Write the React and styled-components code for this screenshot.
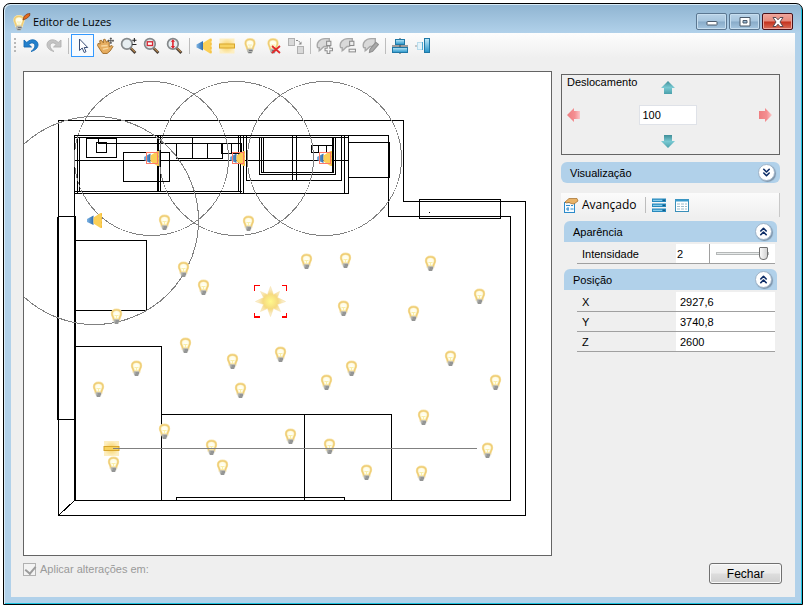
import React, {useState} from 'react'
import styled, {createGlobalStyle} from 'styled-components'
import {ChevronsDown, ChevronsUp} from 'lucide-react'

const GlobalStyle = createGlobalStyle`
    * {
        box-sizing: border-box;
    }
    body {
        margin: 0;
        background: #fff;
        color: #000;
        font-family: 'Liberation Sans', Arial, sans-serif;
        font-size: 11px;
        line-height: 14px;
    }
    button,
    input {
        font: inherit;
        color: inherit;
    }
`

const StyledDesktop = styled.div`
    display: flex;
    min-height: 100vh;
    padding: 3px 4px 5px 3px;
`

const StyledWindow = styled.main`
    flex: 1;
    display: flex;
    flex-direction: column;
    min-width: 0;
    padding: 0 7px 7px 7px;
    border: 1px solid #000;
    border-radius: 7px 7px 0 0;
    background: linear-gradient(#8fb4d1, #b1d1ea 29px);
    box-shadow: inset 1px 1px 0 #d9ecf8, inset -1px -1px 0 #1cc3e0;
`

const StyledTitleBar = styled.header`
    display: flex;
    align-items: center;
    height: 29px;
    padding: 6px 2px 0 2px;
    gap: 2px;
`

const StyledTitle = styled.h1`
    flex: 1;
    margin: 0;
    font-family: 'Open Sans', sans-serif;
    font-size: 11px;
    font-weight: 400;
    line-height: 16px;
`

const StyledCaptionButton = styled.button`
    display: flex;
    align-items: center;
    justify-content: center;
    width: 31px;
    height: 17px;
    padding: 0;
    border: 1px solid ${props => props.$danger ? '#4a1018' : '#5b7791'};
    border-radius: 2px;
    background: ${props => props.$danger
        ? 'linear-gradient(#f0a59b, #e58a7c 48%, #c4301c 52%, #d9705c)'
        : 'linear-gradient(#b9d3e8, #a6c5de 48%, #88abc8 52%, #a5c6e0)'};
    box-shadow: inset 0 0 0 1px ${props => props.$danger ? '#eea69c' : '#c7deef'};
`

const StyledBody = styled.div`
    flex: 1;
    display: flex;
    flex-direction: column;
    background: #efefef;
`

const StyledToolbar = styled.div`
    display: flex;
    align-items: center;
    height: 25px;
    padding-left: 3px;
    background: linear-gradient(#fdfdfd, #efefef);
`

const StyledGrip = styled.span`
    width: 2px;
    height: 15px;
    margin-right: 3px;
    background: repeating-linear-gradient(#b8b8b8 0 2px, transparent 2px 4px);
`

const StyledToolButton = styled.button`
    display: flex;
    align-items: center;
    justify-content: center;
    width: 23px;
    height: 23px;
    padding: 0;
    border: 1px solid ${props => props.$active ? '#3399ff' : 'transparent'};
    background: ${props => props.$active ? '#f7fbff' : 'transparent'};
    &:hover {
        border-color: #3399ff;
    }
`

const StyledSeparator = styled.span`
    width: 1px;
    height: 16px;
    margin: 0 2px 0 3px;
    background: #bdbdbd;
`

const StyledContent = styled.div`
    display: flex;
    align-items: flex-start;
    gap: 9px;
    padding: 13px 15px 0 12px;
`

const StyledCanvas = styled.section`
    flex: 1;
    min-width: 0;
    border: 1px solid #646464;
    background: #fff;
    & svg {
        display: block;
        width: 100%;
        height: auto;
    }
`

const StyledPanel = styled.aside`
    display: flex;
    flex-direction: column;
    width: 219px;
    padding-top: 3px;
`

const StyledMoveBox = styled.div`
    display: grid;
    grid-template-columns: 23px 1fr 29px;
    grid-template-rows: 25px 30px 24px;
    align-items: center;
    justify-items: center;
    margin-bottom: 7px;
    border: 1px solid #646464;
`

const StyledMoveLabel = styled.label`
    grid-area: 1 / 1 / 2 / 3;
    align-self: start;
    justify-self: start;
    padding-left: 5px;
`

const StyledMoveInput = styled.input`
    grid-area: 2 / 2;
    width: 58px;
    height: 20px;
    padding: 0 3px;
    border: 1px solid #dfe2e8;
    background: #fff;
`

const StyledArrow = styled.button`
    display: flex;
    grid-area: ${props => props.$area};
    padding: 0;
    border: 0;
    background: none;
`

const StyledSectionHeader = styled.h2`
    display: flex;
    align-items: center;
    justify-content: space-between;
    height: 21px;
    margin: 0;
    padding: 0 5px 0 9px;
    border-radius: ${props => props.$closed ? '6px' : '6px 6px 0 0'};
    background: #b1d1ea;
    font-size: 11px;
    font-weight: 400;
`

const StyledToggle = styled.button`
    display: flex;
    align-items: center;
    justify-content: center;
    width: 17px;
    height: 17px;
    padding: 0;
    border: 1px solid #9fb4c9;
    border-radius: 50%;
    background: #fff;
    box-shadow: 1px 1px 1px #7d93a8;
    color: #0c2c66;
`

const StyledPanelBar = styled.div`
    display: flex;
    align-items: center;
    height: 24px;
    margin: 10px 0 4px;
    padding-left: 2px;
    border-right: 1px solid #c8c8c8;
    background: linear-gradient(#fbfbfb, #efefef);
`

const StyledAdvanced = styled.button`
    display: flex;
    align-items: center;
    gap: 3px;
    padding: 0;
    margin-right: 5px;
    border: 0;
    background: none;
    font-family: 'Open Sans', sans-serif;
    font-size: 12px;
`

const StyledSections = styled.div`
    display: flex;
    flex-direction: column;
    gap: 5px;
    padding: 0 3px;
`

const StyledFields = styled.div`
    padding: 2px 2px 0 13px;
`

const StyledField = styled.div`
    display: flex;
    align-items: center;
    height: 20px;
    border-bottom: 1px solid #a0a0a0;
`

const StyledFieldLabel = styled.label`
    flex: 1;
    padding-left: 5px;
`

const StyledFieldValue = styled.div`
    display: flex;
    align-items: center;
    width: 99px;
    height: 19px;
    background: #fff;
`

const StyledFieldInput = styled.input`
    width: ${props => props.$short ? '33px' : '99px'};
    height: 19px;
    padding: 0 0 0 ${props => props.$short ? '1px' : '4px'};
    border: 0;
    background: transparent;
`

const StyledSlider = styled.input`
    appearance: none;
    width: 66px;
    height: 19px;
    margin: 0;
    padding: 0 6px;
    border-left: 1px solid #a0a0a0;
    background: transparent;
    &::-webkit-slider-runnable-track {
        height: 3px;
        border: 1px solid #b5b8b8;
        background: #e7eaea;
    }
    &::-webkit-slider-thumb {
        appearance: none;
        width: 9px;
        height: 13px;
        margin-top: -6px;
        border: 1px solid #707070;
        border-radius: 1px 1px 4px 4px;
        background: linear-gradient(90deg, #fafafa, #d2d2d2);
    }
`

const StyledFooter = styled.footer`
    display: flex;
    align-items: flex-start;
    justify-content: space-between;
    padding: 6px 13px 12px 12px;
`

const StyledCheckLabel = styled.label`
    display: flex;
    align-items: center;
    gap: 4px;
    color: #9a9a9a;
    & input {
        appearance: none;
        width: 13px;
        height: 13px;
        margin: 0;
        border: 1px solid #b1b1b1;
        background: #f3f3f3;
    }
    & input:checked::before {
        content: '';
        display: block;
        width: 5px;
        height: 8px;
        margin: 0 3px;
        border: solid #9c9c9c;
        border-width: 0 2px 2px 0;
        transform: rotate(40deg);
    }
`

const StyledClose = styled.button`
    width: 73px;
    height: 21px;
    margin-top: 1px;
    padding: 0;
    border: 1px solid #707070;
    border-radius: 3px;
    background: linear-gradient(#f2f2f2, #ebebeb 48%, #dddddd 52%, #cfcfcf);
    box-shadow: inset 0 0 0 1px #fafafa;
    font-size: 12px;
`

// shared gradients, referenced by every icon through url(#...)
const Gradients = () => (
    <svg width="0" height="0" style={{position: 'absolute'}} aria-hidden="true">
        <defs>
            <radialGradient id="glass">
                <stop offset="0" stopColor="#fffffa"/>
                <stop offset="0.7" stopColor="#fffde4"/>
                <stop offset="1" stopColor="#fbeeb8"/>
            </radialGradient>
            <radialGradient id="sun">
                <stop offset="0" stopColor="#fff98c"/>
                <stop offset="0.5" stopColor="#f6da80"/>
                <stop offset="1" stopColor="#f4dca4" stopOpacity="0.3"/>
            </radialGradient>
            <radialGradient id="strip">
                <stop offset="0" stopColor="#f8d160"/>
                <stop offset="1" stopColor="#fdeec0"/>
            </radialGradient>
            <linearGradient id="lamp">
                <stop offset="0" stopColor="#7db4e4"/>
                <stop offset="1" stopColor="#2e6cae"/>
            </linearGradient>
            <linearGradient id="teal" x2="0" y2="1">
                <stop offset="0" stopColor="#3f8e98"/>
                <stop offset="0.5" stopColor="#79c9d2"/>
                <stop offset="1" stopColor="#4aa0ab"/>
            </linearGradient>
            <linearGradient id="pink">
                <stop offset="0" stopColor="#ee7d80"/>
                <stop offset="0.6" stopColor="#f48f92"/>
                <stop offset="1" stopColor="#fbc6c8"/>
            </linearGradient>
            <linearGradient id="azure" x2="0" y2="1">
                <stop offset="0" stopColor="#bfe9fa"/>
                <stop offset="1" stopColor="#2493c8"/>
            </linearGradient>
        </defs>
    </svg>
)

const Icon = ({children, size = 16}) => (
    <svg width={size} height={size} viewBox="0 0 16 16" fill="none" aria-hidden="true">{children}</svg>
)

const BulbShape = () => (
    <g>
        <path d="M8 1.300C5 1.300 3.500 2.800 3.500 5.200C3.500 7.500 5 8.500 5.200 11H10.800C11 8.500 12.500 7.500 12.500 5.200C12.500 2.800 11 1.300 8 1.300Z" fill="url(#glass)" stroke="#f7e3ab" strokeWidth="2.400"/>
        <path d="M8 1.300C5 1.300 3.500 2.800 3.500 5.200C3.500 7.500 5 8.500 5.200 11M10.800 11C11 8.500 12.500 7.500 12.500 5.200C12.500 2.800 11 1.300 8 1.300" stroke="#efcd72" strokeWidth="1.300"/>
        <path d="M6 7H10M8 7.500V10.500" stroke="#f8eda0" strokeWidth="0.900"/>
        <path d="M5.200 10.800H10.800V13.500L9.700 15.500H6.300L5.200 13.500Z" fill="#b4b5af"/>
        <path d="M7 12.500H10.500M6.500 14.500H9.500" stroke="#74777c"/>
    </g>
)

const SpotShape = () => (
    <g>
        <path d="M0.500 6.500L7 3V12.500L0.500 9.500Z" fill="url(#lamp)"/>
        <path d="M7 5L14 0.500H15.500V15.500H14L7 11Z" fill="#fbcf56"/>
        <path d="M15 1V15" stroke="#f1b93b" strokeDasharray="2 2"/>
    </g>
)

const StripShape = () => (
    <g>
        <rect x="0.500" y="0.500" width="15" height="15" fill="url(#strip)"/>
        <rect x="0.500" y="6" width="15" height="4" fill="#f7d260" stroke="#d8a52c"/>
    </g>
)

const Lens = ({children}) => (
    <Icon size={17}>
        <path d="M9.500 10L14.500 15" stroke="#4b4036" strokeWidth="2.600"/>
        <path d="M10.500 10.500L14 14" stroke="#c08a4d"/>
        <circle cx="6.500" cy="6.500" r="5" fill="#e6edf0" stroke="#85898b" strokeWidth="1.600"/>
        {children}
    </Icon>
)

const Lasso = ({children}) => (
    <Icon size={17}>
        <path d="M1.500 10C0 5.500 3.500 1.500 8.500 1.500H12.500V7L9 9H7.500C6 10 5 11.500 3 13V10Z" fill="#d9d9d9" stroke="#a8a8a8" strokeWidth="1.300"/>
        {children}
    </Icon>
)

const icons = {
    undo: (
        <Icon>
            <path d="M1 2V9H8.500L5.800 6.500C8.500 3.500 12.500 5 11.800 8.300C11.500 10.500 10 12 8 13.500C12.500 12.500 15.300 9.500 15 6.300C14.500 1.500 8 0 3.800 4.500Z" fill="#2380cc" stroke="#166bb3" strokeWidth="0.900"/>
        </Icon>
    ),
    redo: (
        <Icon>
            <path d="M15 2V9H7.500L10.200 6.500C7.500 3.500 3.500 5 4.200 8.300C4.500 10.500 6 12 8 13.500C3.500 12.500 0.700 9.500 1 6.300C1.500 1.500 8 0 12.200 4.500Z" fill="#c4c4c4" stroke="#b2b2b2" strokeWidth="0.900"/>
        </Icon>
    ),
    pointer: (
        <Icon>
            <path d="M4.500 1V12.500L7.200 10L9.200 14.500L11 13.700L9.200 9.500H12.700Z" fill="#fff" stroke="#3a4f78"/>
        </Icon>
    ),
    hand: (
        <Icon size={17}>
            <path d="M1 6L3 6.500L2.500 3.500L4 3L6 5.500L6 2.500L7.500 2L9 5L10 3.500L11.500 5L11.500 9L14 8L15 9L12.500 13L9.500 15.500H5.500L3 12L0.500 8Z" fill="#e6ad60" stroke="#9a641f" strokeWidth="0.800"/>
            <path d="M4 8.500L10 8M5.500 11.500L10.500 10.500" stroke="#f9d89f" strokeWidth="1.300"/>
            <path d="M13 0.500V6.500M10 3.500H16M12 1.500H14M12 5.500H14M11 2.500V4.500M15 2.500V4.500" stroke="#444" strokeWidth="0.800"/>
        </Icon>
    ),
    zoom: (
        <Lens>
            <path d="M11.500 3H15.500M13.500 1V5M11.500 7H15.500" stroke="#222"/>
        </Lens>
    ),
    zoomWindow: (
        <Lens>
            <rect x="4" y="4.500" width="5" height="3.500" fill="#fff" stroke="#d52b35" strokeWidth="1.300"/>
        </Lens>
    ),
    zoomExtents: (
        <Lens>
            <path d="M6.500 3V10" stroke="#df2630" strokeWidth="1.500"/>
            <path d="M4.500 4.500L6.500 2L8.500 4.500ZM4.500 8.500L6.500 11L8.500 8.500Z" fill="#df2630"/>
        </Lens>
    ),
    spot: <Icon><SpotShape/></Icon>,
    strip: <Icon><StripShape/></Icon>,
    bulb: <Icon><BulbShape/></Icon>,
    bulbRemove: (
        <Icon>
            <BulbShape/>
            <path d="M7 8L15 15M15 8L7 15" stroke="#e22a2a" strokeWidth="1.800"/>
        </Icon>
    ),
    replace: (
        <Icon>
            <rect x="0.500" y="0.500" width="6" height="7" fill="#d9d9d9" stroke="#b0b0b0"/>
            <rect x="9.500" y="8.500" width="6" height="7" fill="#d9d9d9" stroke="#b0b0b0"/>
            <path d="M8 2.500H10.500L12.500 5.500" stroke="#888" strokeDasharray="2 1"/>
            <path d="M10.500 6.500H13.500V3.500Z" fill="#888"/>
        </Icon>
    ),
    lassoAdd: (
        <Lasso>
            <rect x="10" y="4" width="4" height="4" fill="#eee" stroke="#8b8b8b"/>
            <path d="M10.500 10.500V8.500H13V10.500H15.500V13H13V15.500H10.500V13H8.500V10.500Z" fill="#f4f4f4" stroke="#909090"/>
        </Lasso>
    ),
    lassoRemove: (
        <Lasso>
            <rect x="10" y="4" width="4" height="4" fill="#eee" stroke="#8b8b8b"/>
            <rect x="9.500" y="11.500" width="6" height="2.500" fill="#f4f4f4" stroke="#909090"/>
        </Lasso>
    ),
    lassoEdit: (
        <Lasso>
            <path d="M7 14.500L7.500 11.500L13 5L15.500 7L10 13.500Z" fill="#a9a9a9" stroke="#909090"/>
        </Lasso>
    ),
    alignCenter: (
        <Icon>
            <path d="M8 0V16" stroke="#444"/>
            <rect x="3.500" y="1.500" width="9" height="5" fill="url(#azure)" stroke="#1f78a6"/>
            <rect x="0.500" y="9.500" width="15" height="5" fill="url(#azure)" stroke="#1f78a6"/>
            <path d="M0 8H16" stroke="#444"/>
        </Icon>
    ),
    alignRight: (
        <Icon>
            <rect x="9.500" y="0.500" width="5" height="14" fill="url(#azure)" stroke="#1f78a6"/>
            <rect x="2.500" y="4.500" width="5" height="7" fill="#e4f4fb" stroke="#b9dcec"/>
            <path d="M7.500 4V12" stroke="#4aa9d3"/>
            <path d="M0 8H2" stroke="#999"/>
        </Icon>
    ),
    advanced: (
        <Icon>
            <rect x="1.500" y="5.500" width="10" height="10" fill="#f6fbff" stroke="#2d8bca"/>
            <path d="M3 8.500H7M8 8.500H10M3 12H6M7.500 12H10.500M5 10V14" stroke="#2d8bca"/>
            <path d="M2 5L6 1.500H14L15 4L11 7L8 6.500L6 5.500L3 6Z" fill="#e9b368" stroke="#a06c2a" strokeWidth="0.700"/>
        </Icon>
    ),
    list: (
        <Icon>
            <path d="M1 1.500H15V5H1ZM1 6.500H15V10H1ZM1 11.500H15V15H1Z" fill="#2789bd"/>
            <path d="M2 3.300H11M2 8.300H11M2 13.300H11" stroke="#9ddcf5"/>
            <path d="M12 3.300H14M12 8.300H14M12 13.300H14" stroke="#134f74"/>
        </Icon>
    ),
    table: (
        <Icon>
            <rect x="1.500" y="2.500" width="13" height="12" fill="#fff" stroke="#3a8fb9"/>
            <path d="M1 3.500H15" stroke="#3a9acb" strokeWidth="2"/>
            <path d="M3 7H6M7 7H10M11 7H13M3 9.500H6M7 9.500H10M11 9.500H13M3 12H6M7 12H10M11 12H13" stroke="#9dbccb"/>
        </Icon>
    )
}

const tools = [
    ['undo', 'Desfazer'], ['redo', 'Refazer'], null,
    ['pointer', 'Selecionar'], ['hand', 'Mover'], ['zoom', 'Zoom'],
    ['zoomWindow', 'Zoom em janela'], ['zoomExtents', 'Zoom total'], null,
    ['spot', 'Spot'], ['strip', 'Luz linear'], ['bulb', 'Luz pontual'],
    ['bulbRemove', 'Remover luz'], ['replace', 'Substituir'], null,
    ['lassoAdd', 'Adicionar grupo'], ['lassoRemove', 'Remover grupo'], ['lassoEdit', 'Editar grupo'], null,
    ['alignCenter', 'Centralizar'], ['alignRight', 'Alinhar']
]

const bulbs = [
    [164, 222], [248, 223], [306, 261], [345, 260], [430, 263], [183, 269], [203, 287], [343, 308],
    [413, 313], [479, 296], [116, 316], [185, 345], [232, 361], [280, 354], [136, 368], [98, 389],
    [240, 390], [326, 382], [351, 368], [450, 358], [495, 382], [423, 417], [164, 431], [211, 447],
    [290, 436], [329, 446], [487, 450], [113, 464], [222, 467], [366, 472], [421, 473]
]

const spots = [
    {x: 143, y: 150, marked: true},
    {x: 229, y: 150, marked: true},
    {x: 316, y: 150, marked: true},
    {x: 86, y: 212, marked: false}
]

const FloorPlan = () => (
    <svg viewBox="23.5 71.5 527 483" fill="none" role="img" aria-label="Planta">
        <g stroke="#000" shapeRendering="crispEdges">
            {/* walls */}
            <path d="M58 120H403V201H525V515H58Z"/>
            <path d="M74 135H388V216H510V500H74Z"/>
            <path d="M58 515L74 500"/>
            <path d="M57 216H75M57 419H75"/>
            <path d="M57.500 216V419M74.500 216V500" strokeWidth="2"/>
            <rect x="419" y="199" width="81" height="19"/>
            <path d="M428 212H429"/>
            {/* furniture */}
            <path d="M75 240H146V310H75M75 346H161V500M161 414H391V500M304 414V500M176 500V497H344V500"/>
            {/* kitchen counter */}
            <path d="M74 137H348M74 191H241M74 193H348M74 160H348"/>
            <path d="M77 137V193M79 137V191M160 135V191M238 135V191M240 135V193M243 135V193M344 135V193M348 135V193"/>
            <path d="M157.500 135V191" strokeWidth="2"/>
            <path d="M86 138H116V157H86ZM96 142H106V152H96ZM98 138V143H241V153H221V143M231 143V153"/>
            <path d="M123 152H169V181H123ZM176 143V158H222V143M192 137V158M207 143V158"/>
            <path d="M246 135V180H341V135M292 135V180M296 135V180M259 137V174H335V137M261 137V172H333V137"/>
            <path d="M332 137V172M263 137V172M311 145H333V152H311ZM318 145V152M326 145V152"/>
            <path d="M348 142H389V177H348Z"/>
        </g>
        <g stroke="#808080" shapeRendering="crispEdges">
            <circle cx="151" cy="158" r="77"/>
            <circle cx="236" cy="158" r="77"/>
            <circle cx="324" cy="158" r="77"/>
            <circle cx="94" cy="220" r="104"/>
        </g>
        {spots.map(({x, y, marked}) => (
            <g key={x} transform={`translate(${x} ${y})`}>
                <SpotShape/>
                {marked && <rect x="3" y="2" width="11" height="11" stroke="#ff7a66"/>}
            </g>
        ))}
        {bulbs.map(([x, y]) => (
            <g key={`${x}-${y}`} transform={`translate(${x - 8} ${y - 8})`}><BulbShape/></g>
        ))}
        <g transform="translate(103 440)"><StripShape/></g>
        <path d="M112 448H476" stroke="#808080" shapeRendering="crispEdges"/>
        <path d="M270 286L273 294L279 291L277 297L285 301L277 304L280 311L273 308L270 316L267 308L260 311L263 304L255 301L263 297L260 291L267 294Z" fill="url(#sun)" stroke="#f6dda0" strokeOpacity="0.500"/>
        <path d="M254 290V285H259M281 285H286V290M286 312V317H281M259 317H254V312" stroke="#f00" shapeRendering="crispEdges"/>
        <path d="M281 316H286M259 316H254" stroke="#f00" shapeRendering="crispEdges"/>
    </svg>
)

const arrowPaths = {
    up: 'M7 0L14 7H11V13H3V7H0Z',
    down: 'M7 13L14 6H11V0H3V6H0Z',
    left: 'M0 7L7 0V3H13V11H7V14Z',
    right: 'M14 7L7 0V3H1V11H7V14Z'
}

const MoveArrow = ({area, label, color, direction}) => (
    <StyledArrow type="button" aria-label={label} $area={area}>
        <svg width="14" height="14" viewBox="0 0 14 14" aria-hidden="true">
            <path d={arrowPaths[direction]} fill={color}/>
        </svg>
    </StyledArrow>
)

const Section = ({title, children, initialOpen}) => {
    const [open, setOpen] = useState(initialOpen)
    const Chevron = open ? ChevronsUp : ChevronsDown
    return (
        <section>
            <StyledSectionHeader $closed={!open}>
                {title}
                <StyledToggle type="button" aria-label={title} aria-expanded={open} onClick={() => setOpen(!open)}>
                    <Chevron size={13} strokeWidth={3}/>
                </StyledToggle>
            </StyledSectionHeader>
            {open && <StyledFields>{children}</StyledFields>}
        </section>
    )
}

const Field = ({name, value}) => (
    <StyledField>
        <StyledFieldLabel htmlFor={name}>{name}</StyledFieldLabel>
        <StyledFieldValue>
            <StyledFieldInput id={name} defaultValue={value}/>
        </StyledFieldValue>
    </StyledField>
)

const App = () => {
    const [tool, setTool] = useState('pointer')
    const [intensity, setIntensity] = useState('2')

    return (
        <StyledDesktop>
            <GlobalStyle/>
            <Gradients/>
            <StyledWindow>
                <StyledTitleBar>
                    <svg width="18" height="18" viewBox="0 0 18 18" fill="none" aria-hidden="true">
                        <g transform="translate(-2 2)"><BulbShape/></g>
                        <path d="M10 7L11 3.500L14 1L17 0.500L16.500 3L13.500 5.500Z" fill="#e56a1c" stroke="#7e330c" strokeWidth="0.700"/>
                    </svg>
                    <StyledTitle>Editor de Luzes</StyledTitle>
                    <StyledCaptionButton type="button" aria-label="Minimizar">
                        <svg width="12" height="9" viewBox="0 0 12 9">
                            <rect x="1" y="4.500" width="10" height="3.500" rx="0.500" fill="#fff" stroke="#4b5a6b"/>
                        </svg>
                    </StyledCaptionButton>
                    <StyledCaptionButton type="button" aria-label="Maximizar">
                        <svg width="12" height="10" viewBox="0 0 12 10">
                            <path d="M1 0.500H11V9H1ZM4 3.500V6H8V3.500Z" fill="#fff" fillRule="evenodd" stroke="#4b5a6b"/>
                        </svg>
                    </StyledCaptionButton>
                    <StyledCaptionButton type="button" aria-label="Fechar janela" $danger>
                        <svg width="12" height="10" viewBox="0 0 12 10">
                            <path d="M1 0.500H4L6 2.800L8 0.500H11L8 5L11 9.500H8L6 7.200L4 9.500H1L4 5Z" fill="#fff" stroke="#5a4a52"/>
                        </svg>
                    </StyledCaptionButton>
                </StyledTitleBar>
                <StyledBody>
                    <StyledToolbar>
                        <StyledGrip/>
                        {tools.map((item, i) => item
                            ? (
                                <StyledToolButton
                                    key={item[0]}
                                    type="button"
                                    aria-label={item[1]}
                                    $active={tool === item[0]}
                                    onClick={() => setTool(item[0])}
                                >
                                    {icons[item[0]]}
                                </StyledToolButton>
                            )
                            : <StyledSeparator key={i}/>
                        )}
                    </StyledToolbar>
                    <StyledContent>
                        <StyledCanvas>
                            <FloorPlan/>
                        </StyledCanvas>
                        <StyledPanel>
                            <StyledMoveBox>
                                <StyledMoveLabel htmlFor="step">Deslocamento</StyledMoveLabel>
                                <MoveArrow area="1 / 2" label="Para cima" color="url(#teal)" direction="up"/>
                                <MoveArrow area="2 / 1" label="Para a esquerda" color="url(#pink)" direction="left"/>
                                <StyledMoveInput id="step" defaultValue="100"/>
                                <MoveArrow area="2 / 3" label="Para a direita" color="url(#pink)" direction="right"/>
                                <MoveArrow area="3 / 2" label="Para baixo" color="url(#teal)" direction="down"/>
                            </StyledMoveBox>
                            <Section title="Visualização" initialOpen={false}/>
                            <StyledPanelBar>
                                <StyledAdvanced type="button">
                                    {icons.advanced}
                                    Avançado
                                </StyledAdvanced>
                                <StyledSeparator/>
                                <StyledToolButton type="button" aria-label="Lista">{icons.list}</StyledToolButton>
                                <StyledToolButton type="button" aria-label="Tabela">{icons.table}</StyledToolButton>
                            </StyledPanelBar>
                            <StyledSections>
                                <Section title="Aparência" initialOpen>
                                    <StyledField>
                                        <StyledFieldLabel htmlFor="intensity">Intensidade</StyledFieldLabel>
                                        <StyledFieldValue>
                                            <StyledFieldInput
                                                id="intensity"
                                                $short
                                                value={intensity}
                                                onChange={e => setIntensity(e.target.value)}
                                            />
                                            <StyledSlider
                                                type="range"
                                                min="0"
                                                max="2"
                                                step="0.1"
                                                aria-label="Intensidade"
                                                value={intensity}
                                                onChange={e => setIntensity(e.target.value)}
                                            />
                                        </StyledFieldValue>
                                    </StyledField>
                                </Section>
                                <Section title="Posição" initialOpen>
                                    <Field name="X" value="2927,6"/>
                                    <Field name="Y" value="3740,8"/>
                                    <Field name="Z" value="2600"/>
                                </Section>
                            </StyledSections>
                        </StyledPanel>
                    </StyledContent>
                    <StyledFooter>
                        <StyledCheckLabel>
                            <input type="checkbox" defaultChecked disabled/>
                            Aplicar alterações em:
                        </StyledCheckLabel>
                        <StyledClose type="button">Fechar</StyledClose>
                    </StyledFooter>
                </StyledBody>
            </StyledWindow>
        </StyledDesktop>
    )
}

export default App
